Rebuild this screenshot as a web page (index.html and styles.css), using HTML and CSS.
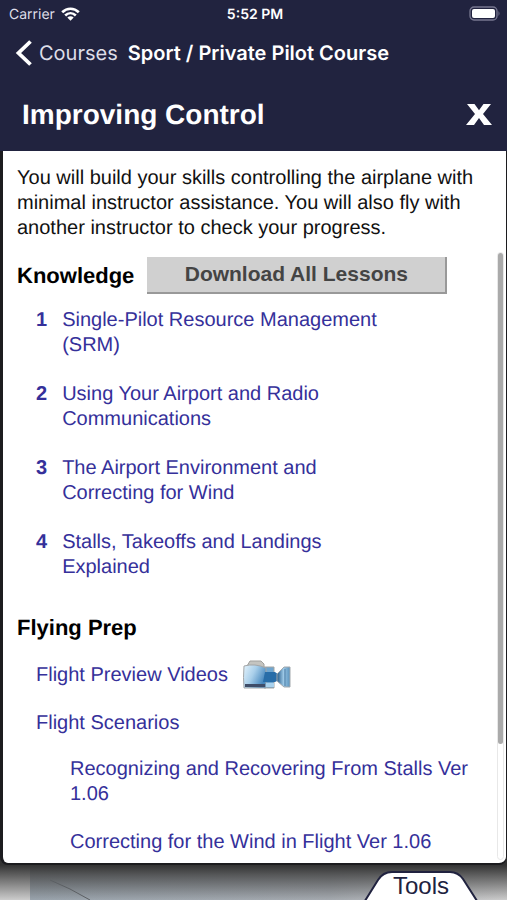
FILE: index.html
```html
<!DOCTYPE html>
<html lang="en">
<head>
<meta charset="utf-8">
<meta name="viewport" content="width=device-width, initial-scale=1">
<title>Sport / Private Pilot Course</title>
<link rel="stylesheet" href="styles.css">
</head>
<body>
<header class="top">
  <div class="status">
    <span class="carrier">Carrier
      <svg width="19" height="14" viewBox="0 0 19 14" aria-hidden="true"><g fill="none" stroke="#fff" stroke-width="2.7"><path d="M1.2 5.2C6 .6 13 .6 17.8 5.2"/><path d="M4.2 8.4C7.3 5.5 11.700 5.5 14.800 8.400"/></g><path fill="#fff" d="M6.300 10.500Q9.500 7.900 12.700 10.500L9.500 13.800Z"/></svg>
    </span>
    <span class="time">5:52 PM</span>
    <svg class="battery" width="32" height="16" viewBox="0 0 32 16" aria-hidden="true"><rect x="1" y="1" width="27" height="13" rx="4" fill="none" stroke="#777790" stroke-width="1.300"/><rect x="3" y="3" width="23" height="9" rx="2" fill="#fff"/><path d="M29.500 5q2 2.500 0 5z" fill="#777790"/></svg>
  </div>
  <nav class="nav">
    <a class="back" href="#courses"><svg width="18" height="28" viewBox="0 0 18 28" aria-hidden="true"><path d="M15.500 2.500 3.500 14l12 11.500" fill="none" stroke="#fff" stroke-width="3.800"/></svg>Courses</a>
    <h1>Sport / Private Pilot Course</h1>
  </nav>
</header>
<main class="dialog">
  <div class="dialog-head">
    <h2>Improving Control</h2>
    <button class="close" type="button" aria-label="Close"><svg width="26" height="21" viewBox="0 0 26 21" aria-hidden="true"><path fill="#fff" d="M1 0h7.500L13 6.300 17.500 0H25l-8 10 9 11h-8l-5-7-5 7H0l9-11Z"/></svg></button>
  </div>
  <div class="content">
    <p class="intro">You will build your skills controlling the airplane with minimal instructor assistance. You will also fly with another instructor to check your progress.</p>
    <section class="lessons">
      <div class="knowledge"><h3>Knowledge</h3><button class="download" type="button">Download All Lessons</button></div>
      <ol class="list">
        <li><b>1</b><a href="#l1">Single-Pilot Resource Management (SRM)</a></li>
        <li><b>2</b><a href="#l2">Using Your Airport and Radio Communications</a></li>
        <li><b>3</b><a href="#l3">The Airport Environment and Correcting for Wind</a></li>
        <li><b>4</b><a href="#l4">Stalls, Takeoffs and Landings Explained</a></li>
      </ol>
      <h3>Flying Prep</h3>
      <div class="prep">
        <a class="videos" href="#videos">Flight Preview Videos
          <svg width="50" height="30" viewBox="0 0 50 30" aria-hidden="true">
            <defs>
              <linearGradient id="body" x2="1" y2=".5"><stop offset="0" stop-color="#e4f3fc"/><stop offset=".5" stop-color="#a9cfea"/><stop offset="1" stop-color="#4687bd"/></linearGradient>
              <linearGradient id="horn"><stop offset="0" stop-color="#245a88"/><stop offset=".5" stop-color="#9cc8e6"/><stop offset="1" stop-color="#5a93bd"/></linearGradient>
            </defs>
            <path d="M22 7h10v21H22Z" fill="#6fa6d0" stroke="#a5a5a2"/>
            <path d="M5 6 8 1h11l3 3v6H5Z" fill="#c4c4c0" stroke="#a0a09d"/>
            <path d="M2 6q11-3 22 2v20H2Q1 18 2 6Z" fill="url(#body)" stroke="#a3a6a8"/>
            <path d="M3 24h20v3H3Z" fill="#3f4d68"/>
            <path d="M23 12h10l4 3v5l-4 2H21Z" fill="#286da8"/>
            <path d="M24 23h8v4h-8Z" fill="#a9d2ee"/>
            <path d="M35 14l7-7h6v20h-6l-7-6Z" fill="url(#horn)" stroke="#a3a9ae"/>
            <path d="M43 9v17" stroke="#6393b8" stroke-width="1.500"/>
          </svg></a>
        <a href="#scenarios">Flight Scenarios</a>
        <ul class="scenarios">
          <li><a href="#s1">Recognizing and Recovering From Stalls Ver 1.06</a></li>
          <li><a href="#s2">Correcting for the Wind in Flight Ver 1.06</a></li>
        </ul>
      </div>
      <div class="track" aria-hidden="true"><div class="thumb"></div></div>
    </section>
  </div>
</main>
<footer class="backdrop">
  <svg class="cable" width="110" height="36" viewBox="0 0 110 36" aria-hidden="true"><path d="M50 16Q70 24 90 36" fill="none" stroke="#5c6064"/></svg>
  <button class="tools" type="button">
    <svg width="116" height="30" viewBox="0 0 116 30" aria-hidden="true"><path d="M0 34 15 10Q20 2 29 2H87Q95 2 100 9L116 34Z" fill="#fff" stroke="#20223f" stroke-width="2"/></svg>
    <span>Tools</span>
  </button>
</footer>
</body>
</html>
```
FILE: styles.css
```css
* { box-sizing: border-box; }
body {
  margin: 0;
  height: 100vh;
  overflow: hidden;
  display: flex;
  flex-direction: column;
  background: #21233f;
  color: #111;
  font: 20px/25px "Liberation Sans", Arial, sans-serif;
  text-rendering: geometricPrecision;
}
h1, h2, h3, p, ol, ul { margin: 0; padding: 0; }
ol, ul { list-style: none; }
a { color: #35309a; text-decoration: none; }
button { border: 0; padding: 0; background: none; font: inherit; cursor: pointer; }
svg { display: block; flex: none; }

.top { color: #fff; font-family: Inter, "Liberation Sans", sans-serif; }
.status {
  display: grid;
  grid-template-columns: 1fr auto 1fr;
  align-items: center;
  height: 28px;
  padding: 0 6px 0 9px;
  font-size: 14px;
}
.carrier { display: flex; align-items: center; gap: 6px; color: #dedee8; }
.time { font-weight: 600; }
.battery { justify-self: end; }
.nav { display: flex; align-items: center; gap: 10px; height: 50px; padding: 0 15px; }
.back { display: flex; align-items: center; gap: 6px; color: #dedee8; }
.nav h1 { font-size: 20px; font-weight: 600; white-space: nowrap; }

.dialog { flex: 1; min-height: 0; display: flex; flex-direction: column; }
.dialog-head {
  display: flex;
  align-items: center;
  justify-content: space-between;
  height: 73px;
  padding: 0 15px 0 22px;
  color: #fff;
}
.dialog-head h2 { font-size: 28px; line-height: 32px; }
.content {
  flex: 1;
  min-height: 0;
  display: flex;
  flex-direction: column;
  padding: 15px 0 0 14px;
  border: solid #1c1c1f;
  border-width: 0 1px 2px 3px;
  border-radius: 0 0 8px 8px;
  background: #fff;
}
.intro { padding-right: 16px; }
.lessons { position: relative; flex: 1; min-height: 0; margin-top: 11px; padding-top: 5px; padding-right: 24px; }
h3 { font-size: 22px; line-height: 26px; color: #000; }
.knowledge { display: flex; align-items: center; gap: 13px; }
.download {
  flex: 0 1 300px;
  height: 37px;
  padding-bottom: 2px;
  border: solid #999;
  border-width: 0 2px 2px 0;
  background: #d0d0d0;
  color: #444;
  font-size: 21px;
  font-weight: bold;
}
.list { display: grid; gap: 24px; margin: 14px 0 35px 19px; }
.list li { display: flex; gap: 15px; max-width: 350px; color: #35309a; }
.prep { display: grid; gap: 21px; margin: 19px 0 0 19px; }
.videos { display: flex; align-items: center; gap: 14px; }
.scenarios { display: grid; gap: 23px; padding-left: 34px; }
.track {
  position: absolute;
  top: 0;
  right: 2px;
  bottom: 3px;
  width: 7px;
  border: 1px solid #e8e8e8;
  border-radius: 4px;
}
.thumb { height: 81%; border-radius: 4px; background: #aaa; }

.backdrop {
  position: relative;
  display: flex;
  justify-content: flex-end;
  align-items: flex-end;
  margin-top: -8px;
  padding-right: 28px;
  flex: 0 0 43px;
  z-index: -1;
  background:
    linear-gradient(#333 8px, #444c 18px, #4440),
    linear-gradient(90deg, #ccc 30px, #9aa4ad 30px, #a5aab0 65%, #ccc);
}
.cable { position: absolute; left: 0; bottom: 0; }
.tools { position: relative; color: #20223f; font-size: 24px; line-height: 28px; }
.tools span { position: absolute; inset: 2px 0 0; }
```
